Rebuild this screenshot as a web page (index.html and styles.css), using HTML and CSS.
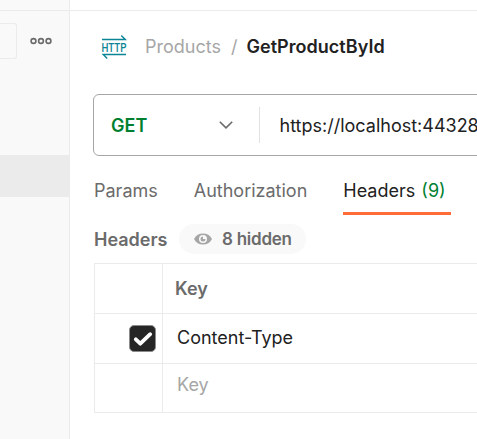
FILE: index.html
```html
<!DOCTYPE html>
<html lang="en">
<head>
<meta charset="utf-8">
<title>GetProductById</title>
<link rel="stylesheet" href="styles.css">
</head>
<body>
<div class="app">
  <aside class="sidebar">
    <div class="strip"></div>
    <div class="side-tools">
      <div class="filter"></div>
      <svg class="dots" width="22" height="8" viewBox="0 0 22 8" fill="none" stroke="#6b6b6b" stroke-width="1.6"><circle cx="3.500" cy="4" r="2.400"/><circle cx="11" cy="4" r="2.400"/><circle cx="18.500" cy="4" r="2.400"/></svg>
    </div>
    <div class="selected"></div>
  </aside>
  <main class="main">
    <div class="strip"></div>
    <header class="crumbs">
      <svg class="http" width="26" height="26" viewBox="0 0 26 26">
        <path d="M1 5.500H24.300L20.300 1.500M25 20.500H2.200L6.200 24.500" fill="none" stroke="#0b8495" stroke-width="1.400"/>
        <text class="http-label" x="0.500" y="18" textLength="25" lengthAdjust="spacingAndGlyphs">HTTP</text>
      </svg>
      <span class="parent">Products</span><span class="slash">/</span><span class="name">GetProductById</span>
    </header>
    <div class="request">
      <span class="method">GET</span>
      <svg class="chevron" width="16" height="10" viewBox="0 0 16 10" fill="none" stroke="#6b6b6b" stroke-width="1.600"><path d="M1.800 1.700L8 7.900L14.200 1.700"/></svg>
      <span class="divider"></span>
      <span class="url">https://localhost:44328</span>
    </div>
    <nav class="tabs">
      <span class="tab params">Params</span>
      <span class="tab auth">Authorization</span>
      <span class="tab active">Headers <span class="count">(9)</span></span>
    </nav>
    <div class="subhead">
      <span class="title">Headers</span>
      <span class="pill">
        <svg width="18" height="12" viewBox="0 0 18 12"><path fill="#a6a6a6" fill-rule="evenodd" d="M0 6C2 2.300 5 .5 9 .5S16 2.300 18 6C16 9.700 13 11.500 9 11.500S2 9.700 0 6ZM9 2A4 4 0 1 0 9 10A4 4 0 1 0 9 2Z"/><path fill="#a6a6a6" d="M9 3.500A2.500 2.500 0 1 0 11.500 6H9Z"/></svg>
        <span class="hidden-count">8 hidden</span>
      </span>
    </div>
    <div class="table">
      <div class="row head"><div class="cell check"></div><div class="cell">Key</div></div>
      <div class="row"><div class="cell check"><span class="box"><svg width="20" height="16" viewBox="0 0 20 16" fill="none" stroke="#fff" stroke-width="3.800" stroke-linecap="round" stroke-linejoin="round"><path d="M2.800 8.300L7.300 12.700L17.200 3.200"/></svg></span></div><div class="cell type">Content-Type</div></div>
      <div class="row last"><div class="cell check"></div><div class="cell placeholder">Key</div></div>
    </div>
  </main>
</div>
</body>
</html>
```
FILE: styles.css
```css
* { box-sizing: border-box; }
body { margin: 0; background: #fff; font-family: Inter, "Liberation Sans", sans-serif; font-size: 18px; line-height: 22px; color: #212121; white-space: nowrap; overflow: hidden; }
svg { display: block; flex: none; }
.app { display: flex; width: 477px; height: 439px; overflow: hidden; }
.sidebar { width: 70px; flex: none; background: #f9f9f9; border-right: 1px solid #ebebeb; }
.strip { height: 11px; border-bottom: 1px solid #ebebeb; }
.side-tools { display: flex; align-items: flex-start; height: 144px; padding-top: 12px; }
.filter { width: 17px; height: 36px; border: 1px solid #ebebeb; border-left: 0; border-radius: 0 3px 3px 0; }
.dots { margin: 14px 0 0 13px; }
.selected { height: 42px; background: #ebebeb; }
.main { flex: none; width: 407px; overflow: hidden; }
.crumbs { display: flex; align-items: center; height: 72px; margin-left: 31px; }
.http-label { font: 500 13px Roboto, sans-serif; fill: #0b8495; }
.parent { margin-left: 18px; color: #a6a6a6; }
.slash { margin-left: 10px; color: #a6a6a6; }
.name { margin-left: 9px; font-weight: 600; letter-spacing: 0.04px; }
.request { display: flex; align-items: center; width: 420px; height: 62px; margin: 11px 0 0 23px; border: 1px solid #a6a6a6; border-radius: 6px; }
.method { width: 124px; padding: 2px 0 0 17px; color: #007f31; font-weight: 600; }
.divider { width: 1px; height: 36px; margin-left: 25px; background: #e1e1e1; }
.url { padding-top: 2px; margin-left: 19.5px; }
.tabs { display: flex; height: 59px; margin-left: 24px; color: #6b6b6b; }
.tab { height: 59px; padding-top: 24px; }
.auth { margin-left: 36px; }
.active { margin-left: 36px; width: 108px; color: #212121; border-bottom: 3px solid #ff6c37; }
.count { margin-left: 1px; color: #007f31; }
.subhead { display: flex; align-items: center; height: 30px; margin: 9px 0 0 24px; color: #6b6b6b; font-weight: 600; }
.title { width: 85px; padding-top: 2px; }
.pill { display: flex; align-items: center; width: 127px; height: 30px; padding-left: 15px; border-radius: 15px; background: #f9f9f9; }
.hidden-count { margin-left: 10px; font-size: 17px; letter-spacing: -0.25px; }
.table { width: 420px; margin: 9px 0 0 24px; border: 1px solid #ebebeb; }
.row { display: flex; height: 50px; border-bottom: 1px solid #ebebeb; }
.last { height: 48px; border: 0; }
.cell { display: flex; align-items: center; padding-left: 14px; }
.check { width: 68px; padding: 0 6px 0 0; justify-content: flex-end; border-right: 1px solid #ebebeb; }
.head { color: #6b6b6b; font-weight: 600; }
.head .cell { padding-left: 12px; }
.type { padding-bottom: 2px; }
.placeholder { color: #a6a6a6; padding-bottom: 7px; }
.box { display: flex; align-items: center; justify-content: center; width: 27px; height: 27px; border: 1px solid #8b8b8b; border-radius: 5px; background: #262626; }
```
